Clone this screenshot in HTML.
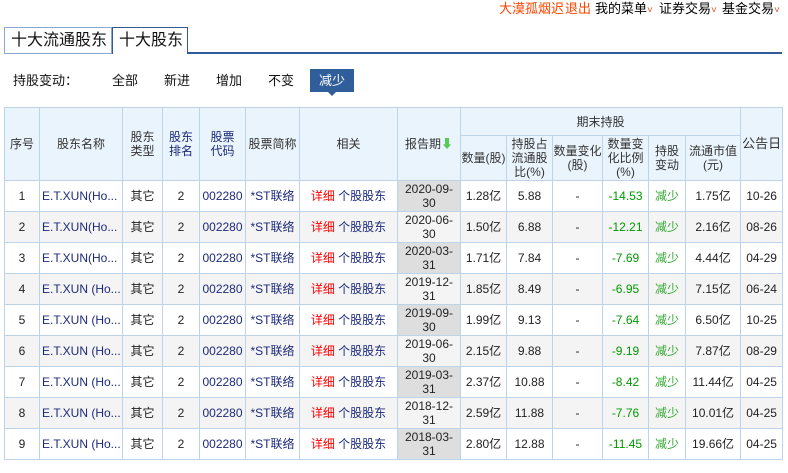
<!DOCTYPE html>
<html><head><meta charset="utf-8"><style>
*{margin:0;padding:0;box-sizing:border-box}
body{width:788px;height:473px;background:#fff;font-family:"Liberation Sans","Noto Sans CJK SC",sans-serif;font-size:12px;color:#333;position:relative;overflow:hidden}
.nav{position:absolute;top:1px;font-size:13px;line-height:16px;color:#000;white-space:nowrap}
.nav i{font-style:normal;color:#e5502a;font-size:10px}
.tab{position:absolute;top:27px;height:27px;border:1px solid #8aa7cf;border-bottom:none;font-size:16px;line-height:26px;padding-left:6px;background:#fff;color:#111}
.line{position:absolute;top:52px;left:188px;width:594px;height:2px;background:#2f5b97}
.f{position:absolute;top:72px;font-size:13px;line-height:18px;color:#111}
.sel{position:absolute;left:310px;top:69px;width:44px;height:23px;background:#2f5e9a;color:#fff;font-size:13px;line-height:23px;text-align:center}
.sel:after{content:"";position:absolute;left:18px;top:23px;border:4px solid transparent;border-top-color:#2f5e9a}
table{position:absolute;left:4px;top:107px;border-collapse:collapse;table-layout:fixed;width:778px}
td,th{border:1px solid #bcd3ea;text-align:center;font-weight:normal;overflow:hidden;white-space:nowrap}
th{background:#eaf4fd;color:#333;line-height:14px;font-size:12px;white-space:normal}
td{height:31px;font-size:12px;line-height:14px;color:#222}
td.l{text-align:left;padding-left:2px}
tr.e td{background:#f4f4f4}
td.d{background:#dedede}
.n{color:#1d2a7a}
.r{color:#f00}
.g{color:#090}
.g2{color:#3a3}
.bl{color:#1d2a7a}
</style></head><body>
<div class="nav" style="left:499px;color:#ff4400">大漠孤烟迟</div>
<div class="nav" style="left:565px;color:#ff4400">退出</div>
<div class="nav" style="left:595px">我的菜单<i>˅</i></div>
<div class="nav" style="left:659px">证券交易<i>˅</i></div>
<div class="nav" style="left:722px">基金交易<i>˅</i></div>
<div class="tab" style="left:4px;width:108px;border-bottom:1px solid #8aa7cf">十大流通股东</div>
<div class="tab" style="left:112px;width:76px;border-color:#2f5b97">十大股东</div>
<div class="line"></div>
<div class="f" style="left:13px">持股变动：</div>
<div class="f" style="left:112px">全部</div>
<div class="f" style="left:164px">新进</div>
<div class="f" style="left:216px">增加</div>
<div class="f" style="left:268px">不变</div>
<div class="sel">减少</div>
<table>
<colgroup><col style="width:35px"><col style="width:83px"><col style="width:40px"><col style="width:37px"><col style="width:46px"><col style="width:54px"><col style="width:98px"><col style="width:63px"><col style="width:46px"><col style="width:46px"><col style="width:50px"><col style="width:46px"><col style="width:37px"><col style="width:55px"><col style="width:42px"></colgroup>
<tr style="height:28px"><th rowspan="2">序号</th><th rowspan="2">股东名称</th><th rowspan="2">股东<br>类型</th><th rowspan="2" class="bl">股东<br>排名</th><th rowspan="2" class="bl">股票<br>代码</th><th rowspan="2">股票简称</th><th rowspan="2">相关</th><th rowspan="2">报告期<span style="color:#5c5">⬇</span></th><th colspan="6">期末持股</th><th rowspan="2" style="font-size:13px">公告日</th></tr>
<tr style="height:45px"><th>数量(股)</th><th>持股占流通股比(%)</th><th>数量变化(股)</th><th>数量变化比例(%)</th><th>持股<br>变动</th><th>流通市值(元)</th></tr>
<tr><td>1</td><td class="n l">E.T.XUN(Ho...</td><td>其它</td><td>2</td><td class="n">002280</td><td class="n">*ST联络</td><td><span class="r">详细</span> <span class="n">个股股东</span></td><td class="d">2020-09-<br>30</td><td>1.28亿</td><td>5.88</td><td>-</td><td class="g">-14.53</td><td class="g2">减少</td><td>1.75亿</td><td>10-26</td></tr>
<tr class="e"><td>2</td><td class="n l">E.T.XUN(Ho...</td><td>其它</td><td>2</td><td class="n">002280</td><td class="n">*ST联络</td><td><span class="r">详细</span> <span class="n">个股股东</span></td><td class="d">2020-06-<br>30</td><td>1.50亿</td><td>6.88</td><td>-</td><td class="g">-12.21</td><td class="g2">减少</td><td>2.16亿</td><td>08-26</td></tr>
<tr><td>3</td><td class="n l">E.T.XUN(Ho...</td><td>其它</td><td>2</td><td class="n">002280</td><td class="n">*ST联络</td><td><span class="r">详细</span> <span class="n">个股股东</span></td><td class="d">2020-03-<br>31</td><td>1.71亿</td><td>7.84</td><td>-</td><td class="g">-7.69</td><td class="g2">减少</td><td>4.44亿</td><td>04-29</td></tr>
<tr class="e"><td>4</td><td class="n l">E.T.XUN (Ho...</td><td>其它</td><td>2</td><td class="n">002280</td><td class="n">*ST联络</td><td><span class="r">详细</span> <span class="n">个股股东</span></td><td class="d">2019-12-<br>31</td><td>1.85亿</td><td>8.49</td><td>-</td><td class="g">-6.95</td><td class="g2">减少</td><td>7.15亿</td><td>06-24</td></tr>
<tr><td>5</td><td class="n l">E.T.XUN (Ho...</td><td>其它</td><td>2</td><td class="n">002280</td><td class="n">*ST联络</td><td><span class="r">详细</span> <span class="n">个股股东</span></td><td class="d">2019-09-<br>30</td><td>1.99亿</td><td>9.13</td><td>-</td><td class="g">-7.64</td><td class="g2">减少</td><td>6.50亿</td><td>10-25</td></tr>
<tr class="e"><td>6</td><td class="n l">E.T.XUN (Ho...</td><td>其它</td><td>2</td><td class="n">002280</td><td class="n">*ST联络</td><td><span class="r">详细</span> <span class="n">个股股东</span></td><td class="d">2019-06-<br>30</td><td>2.15亿</td><td>9.88</td><td>-</td><td class="g">-9.19</td><td class="g2">减少</td><td>7.87亿</td><td>08-29</td></tr>
<tr><td>7</td><td class="n l">E.T.XUN (Ho...</td><td>其它</td><td>2</td><td class="n">002280</td><td class="n">*ST联络</td><td><span class="r">详细</span> <span class="n">个股股东</span></td><td class="d">2019-03-<br>31</td><td>2.37亿</td><td>10.88</td><td>-</td><td class="g">-8.42</td><td class="g2">减少</td><td>11.44亿</td><td>04-25</td></tr>
<tr class="e"><td>8</td><td class="n l">E.T.XUN (Ho...</td><td>其它</td><td>2</td><td class="n">002280</td><td class="n">*ST联络</td><td><span class="r">详细</span> <span class="n">个股股东</span></td><td class="d">2018-12-<br>31</td><td>2.59亿</td><td>11.88</td><td>-</td><td class="g">-7.76</td><td class="g2">减少</td><td>10.01亿</td><td>04-25</td></tr>
<tr><td>9</td><td class="n l">E.T.XUN (Ho...</td><td>其它</td><td>2</td><td class="n">002280</td><td class="n">*ST联络</td><td><span class="r">详细</span> <span class="n">个股股东</span></td><td class="d">2018-03-<br>31</td><td>2.80亿</td><td>12.88</td><td>-</td><td class="g">-11.45</td><td class="g2">减少</td><td>19.66亿</td><td>04-25</td></tr>
</table>
</body></html>
